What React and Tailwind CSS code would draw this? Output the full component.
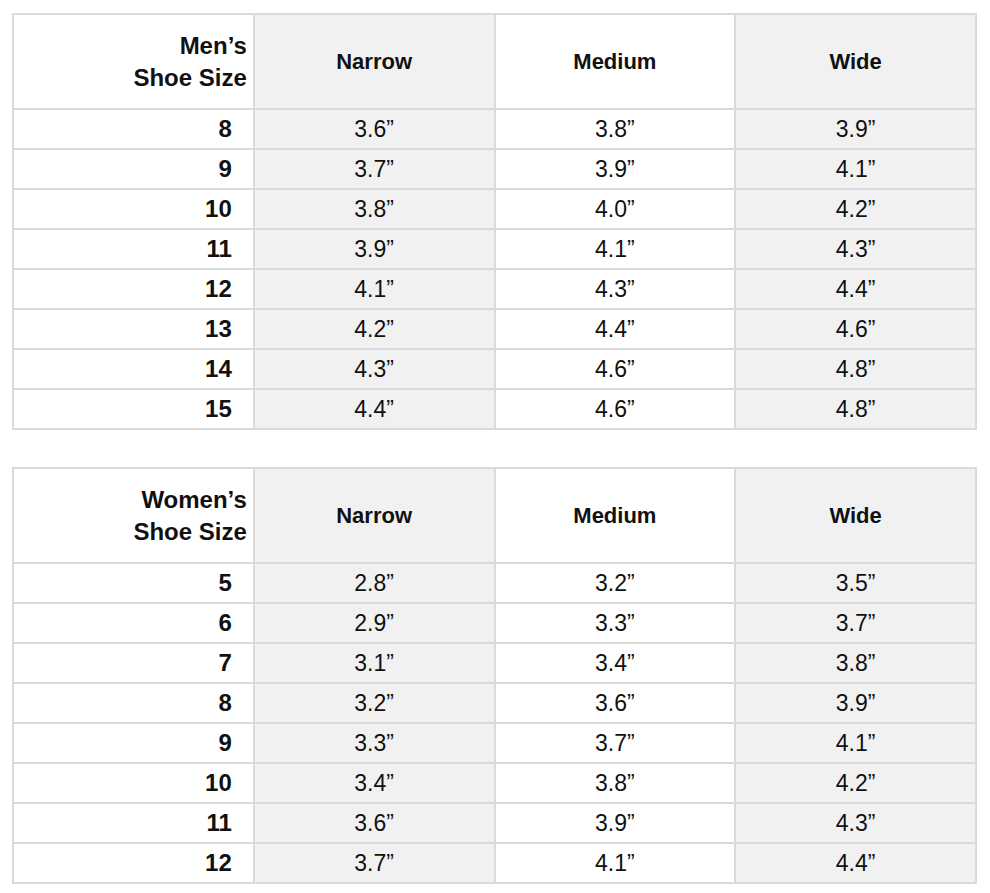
const men = [
  ["8", "3.6”", "3.8”", "3.9”"],
  ["9", "3.7”", "3.9”", "4.1”"],
  ["10", "3.8”", "4.0”", "4.2”"],
  ["11", "3.9”", "4.1”", "4.3”"],
  ["12", "4.1”", "4.3”", "4.4”"],
  ["13", "4.2”", "4.4”", "4.6”"],
  ["14", "4.3”", "4.6”", "4.8”"],
  ["15", "4.4”", "4.6”", "4.8”"],
];

const women = [
  ["5", "2.8”", "3.2”", "3.5”"],
  ["6", "2.9”", "3.3”", "3.7”"],
  ["7", "3.1”", "3.4”", "3.8”"],
  ["8", "3.2”", "3.6”", "3.9”"],
  ["9", "3.3”", "3.7”", "4.1”"],
  ["10", "3.4”", "3.8”", "4.2”"],
  ["11", "3.6”", "3.9”", "4.3”"],
  ["12", "3.7”", "4.1”", "4.4”"],
];

const cell = "border-2 border-[#dadada] p-0 align-middle";
const shade = ["bg-white", "bg-[#f1f1f1]", "bg-white", "bg-[#f1f1f1]"];

function SizeTable({ title, rows }) {
  return (
    <table className="w-[965px] table-fixed border-collapse text-[#111]">
      <thead>
        <tr className="h-[95px]">
          <th className={`${cell} bg-white pr-[6px] text-right text-[24px] font-bold leading-[32px]`}>
            {title}
            <br />
            Shoe Size
          </th>
          {["Narrow", "Medium", "Wide"].map((h, i) => (
            <th key={h} className={`${cell} ${shade[i + 1]} text-center text-[22px] font-bold`}>
              {h}
            </th>
          ))}
        </tr>
      </thead>
      <tbody>
        {rows.map((r) => (
          <tr key={r[0]} className="h-[40px]">
            <td className={`${cell} bg-white pr-[21px] text-right text-[24px] font-bold`}>{r[0]}</td>
            {r.slice(1).map((v, i) => (
              <td key={i} className={`${cell} ${shade[i + 1]} text-center text-[23px]`}>
                {v}
              </td>
            ))}
          </tr>
        ))}
      </tbody>
    </table>
  );
}

export default function App() {
  return (
    <div className="flex min-h-[893px] w-[990px] flex-col gap-[37px] bg-white pl-[12px] pt-[13px] font-['Liberation_Sans',Arial,sans-serif]">
      <SizeTable title="Men’s" rows={men} />
      <SizeTable title="Women’s" rows={women} />
    </div>
  );
}
